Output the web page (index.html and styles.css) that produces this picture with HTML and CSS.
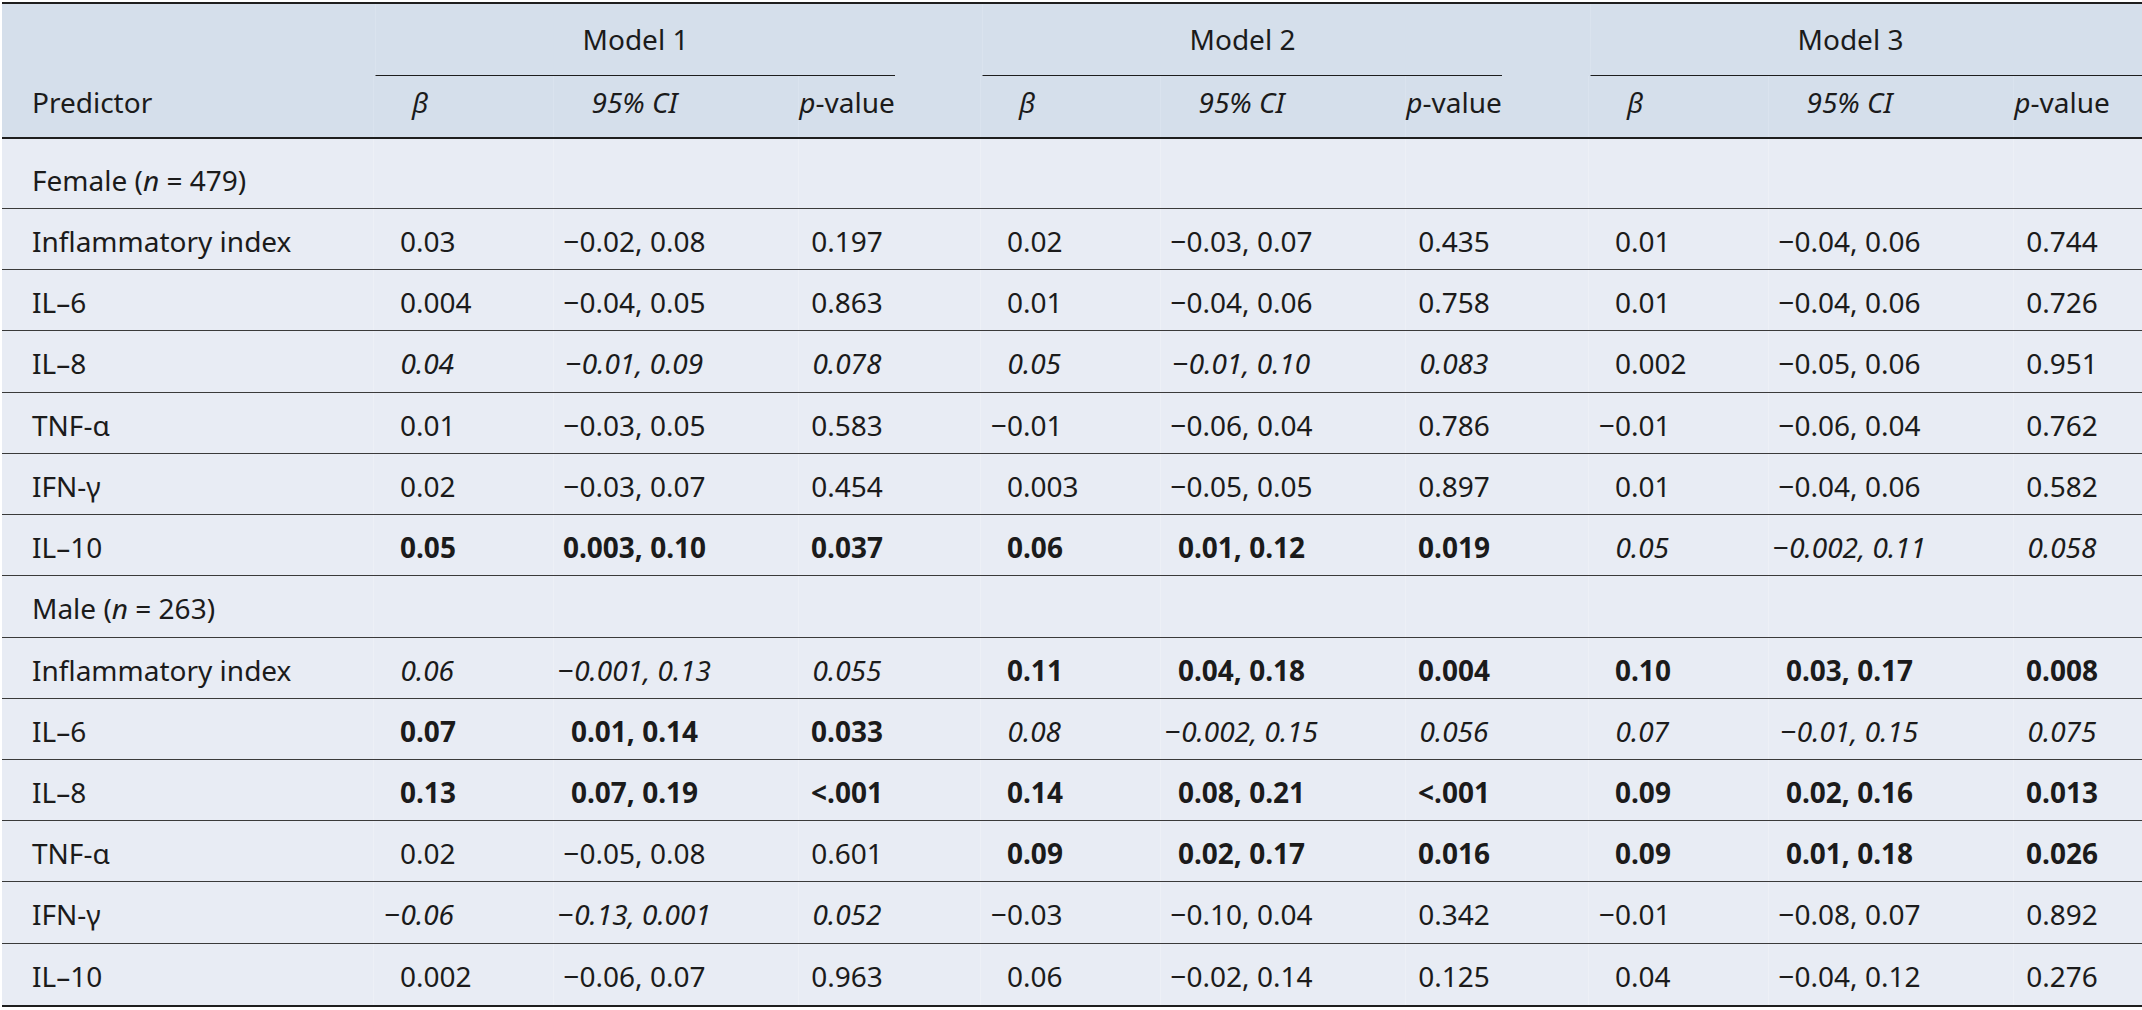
FILE: index.html
```html
<!DOCTYPE html>
<html lang="en">
<head>
<meta charset="utf-8">
<title>Regression table</title>
<link rel="stylesheet" href="styles.css">
</head>
<body>
<div class="tbl">
  <div class="thead">
    <div class="row hr1">
      <div class="c"></div>
      <div class="c span vl">Model 1</div>
      <div class="c"></div>
      <div class="c span vl">Model 2</div>
      <div class="c"></div>
      <div class="c span vl">Model 3</div>
      <div class="c tail"></div>
    </div>
    <div class="row hr2">
      <div class="c pred">Predictor</div>
      <div class="c hb vl"><i>β</i></div>
      <div class="c ci vl"><i>95% CI</i></div>
      <div class="c p vl"><span><i>p</i>-value</span></div>
      <div class="c"></div>
      <div class="c hb vl"><i>β</i></div>
      <div class="c ci vl"><i>95% CI</i></div>
      <div class="c p vl"><span><i>p</i>-value</span></div>
      <div class="c"></div>
      <div class="c hb vl"><i>β</i></div>
      <div class="c ci vl"><i>95% CI</i></div>
      <div class="c p vl"><span><i>p</i>-value</span></div>
      <div class="c"></div>
    </div>
  </div>
  <div class="tbody">
    <div class="row grp">
      <div class="c pred"><span>Female (<i>n</i> = 479)</span></div>
      <div class="c vl"></div><div class="c vl"></div><div class="c vl"></div><div class="c"></div>
      <div class="c vl"></div><div class="c vl"></div><div class="c vl"></div><div class="c"></div>
      <div class="c vl"></div><div class="c vl"></div><div class="c vl"></div><div class="c"></div>
    </div>
    <div class="row r">
      <div class="c pred">Inflammatory index</div>
      <div class="c b vl"><span><span class="i">0</span>.03</span></div>
      <div class="c ci vl">−0.02, 0.08</div>
      <div class="c p vl">0.197</div>
      <div class="c"></div>
      <div class="c b vl"><span><span class="i">0</span>.02</span></div>
      <div class="c ci vl">−0.03, 0.07</div>
      <div class="c p vl">0.435</div>
      <div class="c"></div>
      <div class="c b vl"><span><span class="i">0</span>.01</span></div>
      <div class="c ci vl">−0.04, 0.06</div>
      <div class="c p vl">0.744</div>
      <div class="c"></div>
    </div>
    <div class="row r">
      <div class="c pred">IL–6</div>
      <div class="c b vl"><span><span class="i">0</span>.004</span></div>
      <div class="c ci vl">−0.04, 0.05</div>
      <div class="c p vl">0.863</div>
      <div class="c"></div>
      <div class="c b vl"><span><span class="i">0</span>.01</span></div>
      <div class="c ci vl">−0.04, 0.06</div>
      <div class="c p vl">0.758</div>
      <div class="c"></div>
      <div class="c b vl"><span><span class="i">0</span>.01</span></div>
      <div class="c ci vl">−0.04, 0.06</div>
      <div class="c p vl">0.726</div>
      <div class="c"></div>
    </div>
    <div class="row r">
      <div class="c pred">IL–8</div>
      <div class="c b vl it"><span><span class="i">0</span>.04</span></div>
      <div class="c ci vl it"><span><span class="m">−</span>0.01, 0.09</span></div>
      <div class="c p vl it">0.078</div>
      <div class="c"></div>
      <div class="c b vl it"><span><span class="i">0</span>.05</span></div>
      <div class="c ci vl it"><span><span class="m">−</span>0.01, 0.10</span></div>
      <div class="c p vl it">0.083</div>
      <div class="c"></div>
      <div class="c b vl"><span><span class="i">0</span>.002</span></div>
      <div class="c ci vl">−0.05, 0.06</div>
      <div class="c p vl">0.951</div>
      <div class="c"></div>
    </div>
    <div class="row r">
      <div class="c pred">TNF-α</div>
      <div class="c b vl"><span><span class="i">0</span>.01</span></div>
      <div class="c ci vl">−0.03, 0.05</div>
      <div class="c p vl">0.583</div>
      <div class="c"></div>
      <div class="c b vl"><span><span class="i">−0</span>.01</span></div>
      <div class="c ci vl">−0.06, 0.04</div>
      <div class="c p vl">0.786</div>
      <div class="c"></div>
      <div class="c b vl"><span><span class="i">−0</span>.01</span></div>
      <div class="c ci vl">−0.06, 0.04</div>
      <div class="c p vl">0.762</div>
      <div class="c"></div>
    </div>
    <div class="row r">
      <div class="c pred">IFN-γ</div>
      <div class="c b vl"><span><span class="i">0</span>.02</span></div>
      <div class="c ci vl">−0.03, 0.07</div>
      <div class="c p vl">0.454</div>
      <div class="c"></div>
      <div class="c b vl"><span><span class="i">0</span>.003</span></div>
      <div class="c ci vl">−0.05, 0.05</div>
      <div class="c p vl">0.897</div>
      <div class="c"></div>
      <div class="c b vl"><span><span class="i">0</span>.01</span></div>
      <div class="c ci vl">−0.04, 0.06</div>
      <div class="c p vl">0.582</div>
      <div class="c"></div>
    </div>
    <div class="row r">
      <div class="c pred">IL–10</div>
      <div class="c b vl bd"><span><span class="i">0</span>.05</span></div>
      <div class="c ci vl bd">0.003, 0.10</div>
      <div class="c p vl bd">0.037</div>
      <div class="c"></div>
      <div class="c b vl bd"><span><span class="i">0</span>.06</span></div>
      <div class="c ci vl bd">0.01, 0.12</div>
      <div class="c p vl bd">0.019</div>
      <div class="c"></div>
      <div class="c b vl it"><span><span class="i">0</span>.05</span></div>
      <div class="c ci vl it"><span><span class="m">−</span>0.002, 0.11</span></div>
      <div class="c p vl it">0.058</div>
      <div class="c"></div>
    </div>
    <div class="row r">
      <div class="c pred"><span>Male (<i>n</i> = 263)</span></div>
      <div class="c vl"></div><div class="c vl"></div><div class="c vl"></div><div class="c"></div>
      <div class="c vl"></div><div class="c vl"></div><div class="c vl"></div><div class="c"></div>
      <div class="c vl"></div><div class="c vl"></div><div class="c vl"></div><div class="c"></div>
    </div>
    <div class="row r">
      <div class="c pred">Inflammatory index</div>
      <div class="c b vl it"><span><span class="i">0</span>.06</span></div>
      <div class="c ci vl it"><span><span class="m">−</span>0.001, 0.13</span></div>
      <div class="c p vl it">0.055</div>
      <div class="c"></div>
      <div class="c b vl bd"><span><span class="i">0</span>.11</span></div>
      <div class="c ci vl bd">0.04, 0.18</div>
      <div class="c p vl bd">0.004</div>
      <div class="c"></div>
      <div class="c b vl bd"><span><span class="i">0</span>.10</span></div>
      <div class="c ci vl bd">0.03, 0.17</div>
      <div class="c p vl bd">0.008</div>
      <div class="c"></div>
    </div>
    <div class="row r">
      <div class="c pred">IL–6</div>
      <div class="c b vl bd"><span><span class="i">0</span>.07</span></div>
      <div class="c ci vl bd">0.01, 0.14</div>
      <div class="c p vl bd">0.033</div>
      <div class="c"></div>
      <div class="c b vl it"><span><span class="i">0</span>.08</span></div>
      <div class="c ci vl it"><span><span class="m">−</span>0.002, 0.15</span></div>
      <div class="c p vl it">0.056</div>
      <div class="c"></div>
      <div class="c b vl it"><span><span class="i">0</span>.07</span></div>
      <div class="c ci vl it"><span><span class="m">−</span>0.01, 0.15</span></div>
      <div class="c p vl it">0.075</div>
      <div class="c"></div>
    </div>
    <div class="row r">
      <div class="c pred">IL–8</div>
      <div class="c b vl bd"><span><span class="i">0</span>.13</span></div>
      <div class="c ci vl bd">0.07, 0.19</div>
      <div class="c p vl bd">&lt;.001</div>
      <div class="c"></div>
      <div class="c b vl bd"><span><span class="i">0</span>.14</span></div>
      <div class="c ci vl bd">0.08, 0.21</div>
      <div class="c p vl bd">&lt;.001</div>
      <div class="c"></div>
      <div class="c b vl bd"><span><span class="i">0</span>.09</span></div>
      <div class="c ci vl bd">0.02, 0.16</div>
      <div class="c p vl bd">0.013</div>
      <div class="c"></div>
    </div>
    <div class="row r">
      <div class="c pred">TNF-α</div>
      <div class="c b vl"><span><span class="i">0</span>.02</span></div>
      <div class="c ci vl">−0.05, 0.08</div>
      <div class="c p vl">0.601</div>
      <div class="c"></div>
      <div class="c b vl bd"><span><span class="i">0</span>.09</span></div>
      <div class="c ci vl bd">0.02, 0.17</div>
      <div class="c p vl bd">0.016</div>
      <div class="c"></div>
      <div class="c b vl bd"><span><span class="i">0</span>.09</span></div>
      <div class="c ci vl bd">0.01, 0.18</div>
      <div class="c p vl bd">0.026</div>
      <div class="c"></div>
    </div>
    <div class="row r">
      <div class="c pred">IFN-γ</div>
      <div class="c b vl it"><span><span class="i"><span class="m">−</span>0</span>.06</span></div>
      <div class="c ci vl it"><span><span class="m">−</span>0.13, 0.001</span></div>
      <div class="c p vl it">0.052</div>
      <div class="c"></div>
      <div class="c b vl"><span><span class="i">−0</span>.03</span></div>
      <div class="c ci vl">−0.10, 0.04</div>
      <div class="c p vl">0.342</div>
      <div class="c"></div>
      <div class="c b vl"><span><span class="i">−0</span>.01</span></div>
      <div class="c ci vl">−0.08, 0.07</div>
      <div class="c p vl">0.892</div>
      <div class="c"></div>
    </div>
    <div class="row r">
      <div class="c pred">IL–10</div>
      <div class="c b vl"><span><span class="i">0</span>.002</span></div>
      <div class="c ci vl">−0.06, 0.07</div>
      <div class="c p vl">0.963</div>
      <div class="c"></div>
      <div class="c b vl"><span><span class="i">0</span>.06</span></div>
      <div class="c ci vl">−0.02, 0.14</div>
      <div class="c p vl">0.125</div>
      <div class="c"></div>
      <div class="c b vl"><span><span class="i">0</span>.04</span></div>
      <div class="c ci vl">−0.04, 0.12</div>
      <div class="c p vl">0.276</div>
      <div class="c"></div>
    </div>
  </div>
</div>
</body>
</html>
```

FILE: styles.css
```css
html, body {
  margin: 0;
  padding: 0;
  background: #ffffff;
}

body {
  font-family: "Noto Sans", "Open Sans", "Liberation Sans", sans-serif;
  font-size: 28px;
  color: #1b1b1b;
}

.tbl {
  margin: 2px 0 0 2px;
  width: 2140px;
  border-top: 2px solid #1e1e1e;
  border-bottom: 2px solid #1e1e1e;
}

.row {
  display: grid;
  grid-template-columns: 371px 180px 245px 97px 85px 180px 245px 97px 86px 180px 245px 97px 1fr;
  box-sizing: border-box;
}

.c {
  display: flex;
  align-items: flex-start;
  box-sizing: border-box;
  line-height: 38px;
  white-space: nowrap;
  min-width: 0;
}

.thead {
  background: #d5dfeb;
  border-bottom: 2px solid #1e1e1e;
}

.thead .vl {
  border-left: 1px solid #dae3ee;
}

.tbody {
  background: #e8ecf4;
}

.tbody .vl {
  border-left: 1px solid #edf0f6;
}

.hr1 {
  height: 72px;
}

.hr1 .c {
  padding-top: 16px;
}

.span {
  grid-column: span 3;
  justify-content: center;
  border-bottom: 1px solid #1e1e1e;
  margin-left: 2px;
}

.tail {
  border-bottom: 1px solid #1e1e1e;
}

.hr2 {
  height: 61px;
}

.hr2 .c {
  padding-top: 7px;
}

.pred {
  padding-left: 30px;
}

.hb {
  padding-left: 38px;
}

.ci {
  justify-content: center;
  padding-right: 83px;
}

.p {
  justify-content: center;
}

.i {
  display: inline-block;
  width: 42px;
  text-align: right;
}

.m {
  font-style: normal;
}

.it {
  font-style: italic;
}

.bd {
  font-weight: 700;
}

.tbody .row {
  border-bottom: 1px solid #3a3a3a;
}

.tbody .row:last-child {
  border-bottom: none;
}

.grp {
  height: 70px;
}

.grp .c {
  padding-top: 22px;
}

.r {
  height: 61.23px;
}

.r .c {
  padding-top: 13px;
}
```
